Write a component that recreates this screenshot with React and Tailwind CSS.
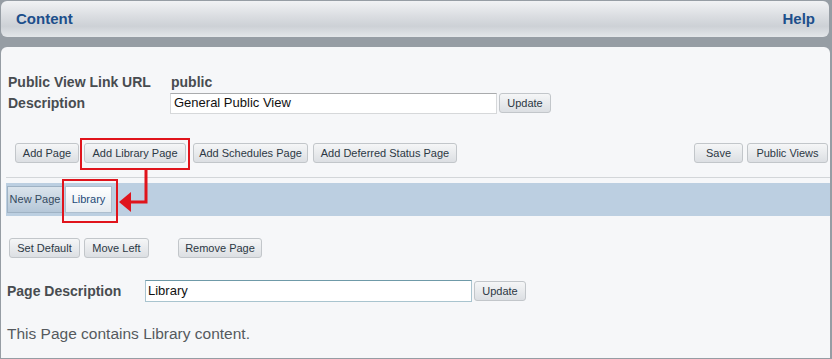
import React from "react";

const btn =
  "flex items-center justify-center h-[20px] rounded-[3px] border border-[#c2c6ca] bg-[linear-gradient(to_bottom,#f5f6f7,#dcdfe3)] text-[11px] text-[#2c3844] leading-none";

function Btn({ w, children, className = "" }) {
  return (
    <div className={`${btn} ${className}`} style={{ width: w }}>
      {children}
    </div>
  );
}

export default function App() {
  return (
    <div
      className="relative w-[832px] h-[359px] bg-[#969da4] p-px flex flex-col overflow-hidden"
      style={{ fontFamily: '"Liberation Sans", Arial, sans-serif' }}
    >
      {/* header */}
      <div className="h-[36px] mr-[2px] rounded-[6px] bg-[linear-gradient(to_bottom,#f1f2f4,#d9dce0_45%,#cdd1d6_70%,#e3e6e9)] flex items-center justify-between pl-[15px] pr-[14px]">
        <span className="text-[15px] font-bold text-[#1d4f8b]">Content</span>
        <span className="text-[15px] font-bold text-[#1d4f8b]">Help</span>
      </div>

      {/* panel */}
      <div className="mt-[10px] flex-1 mr-px rounded-t-[6px] bg-[#f6f7f9] flex flex-col">
        <div className="pt-[25px] pl-[7px]">
          <div className="flex h-[20px] items-center">
            <div className="w-[163px] text-[14px] font-bold text-[#484c50]">Public View Link URL</div>
            <div className="text-[14px] font-bold text-[#484c50]">public</div>
          </div>
          <div className="flex h-[22px] items-center">
            <div className="w-[162px] text-[14px] font-bold text-[#484c50]">Description</div>
            <div className="w-[327px] h-[21px] bg-white border border-[#d6d8da] border-t-[#a9abad] flex items-center pl-[3px] text-[13px] text-[#111]">
              General Public View
            </div>
            <Btn w={52} className="ml-[2px] h-[19px]">Update</Btn>
          </div>
        </div>

        {/* button row */}
        <div className="mt-[29px] flex items-center pl-[14px] pr-[2px]">
          <Btn w={64}>Add Page</Btn>
          <Btn w={102} className="ml-[5px]">Add Library Page</Btn>
          <Btn w={115} className="ml-[7px]">Add Schedules Page</Btn>
          <Btn w={144} className="ml-[5px]">Add Deferred Status Page</Btn>
          <div className="flex-1" />
          <Btn w={49}>Save</Btn>
          <Btn w={81} className="ml-[4px]">Public Views</Btn>
        </div>

        <div className="mt-[14px] ml-[5px] h-px bg-[#d3d6d9]" />

        {/* tab bar */}
        <div className="mt-[5px] ml-[5px] h-[33px] bg-[#bccfe1] flex items-center pl-[1px]">
          <div className="h-[27px] w-[56px] flex items-center justify-center border border-[#9fb2c4] bg-[linear-gradient(to_bottom,#dbe4ec,#b5c7d8)] text-[11px] text-[#34495e]">
            New Page
          </div>
          <div className="h-[27px] w-[47px] ml-[2px] flex items-center justify-center border border-[#aebfcf] bg-[linear-gradient(to_bottom,#ffffff,#e4eaf0)] text-[11px] text-[#1f4a78]">
            Library
          </div>
        </div>

        {/* second button row */}
        <div className="mt-[22px] flex items-center pl-[8px]">
          <Btn w={71}>Set Default</Btn>
          <Btn w={65} className="ml-[4px]">Move Left</Btn>
          <Btn w={84} className="ml-[29px]">Remove Page</Btn>
        </div>

        {/* page description */}
        <div className="mt-[22px] flex h-[22px] items-center pl-[6px]">
          <div className="w-[138px] text-[14px] font-bold text-[#484c50]">Page Description</div>
          <div className="w-[327px] h-[22px] bg-white border border-[#a9c4cf] border-t-[#6f9aa8] flex items-center pl-[2px] text-[13px] text-[#111]">
            Library
          </div>
          <Btn w={52} className="ml-[2px] h-[19px]">Update</Btn>
        </div>

        <div className="mt-[20px] pl-[6px] text-[15.5px] text-[#555a5e]">
          This Page contains Library content.
        </div>
      </div>

      {/* annotations */}
      <div className="absolute left-[80px] top-[138px] w-[110px] h-[32px] border-2 border-[#e0141c]" />
      <div className="absolute left-[62px] top-[179px] w-[56px] h-[44px] border-2 border-[#e0141c]" />
      <svg className="absolute left-0 top-0" width="832" height="359" viewBox="0 0 832 359">
        <polyline points="146,169 146,202 128,202" fill="none" stroke="#e0141c" strokeWidth="3" />
        <polygon points="119,202 131,192 131,212" fill="#e0141c" />
      </svg>
    </div>
  );
}
